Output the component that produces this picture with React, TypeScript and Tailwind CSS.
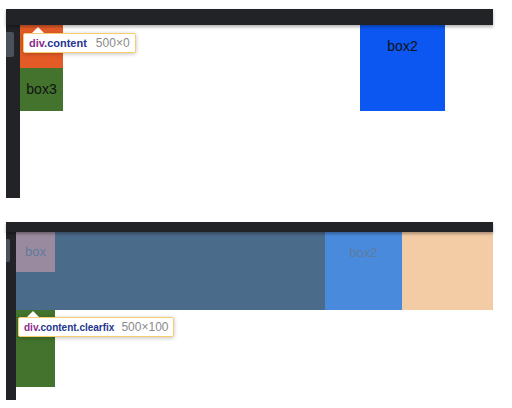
import React from "react";

const font = { fontFamily: '"Liberation Sans", Arial, sans-serif' };

function Tip({
  cls,
  size,
  className,
  labelSize,
  gap,
}: {
  cls: string;
  size: string;
  className: string;
  labelSize: string;
  gap: string;
}) {
  return (
    <div className={"absolute " + className}>
      <div className="absolute left-[9px] top-[-6px] w-0 h-0 border-l-[6px] border-r-[6px] border-b-[6px] border-l-transparent border-r-transparent border-b-white" />
      <div className="h-[20px] flex items-center px-[5px] bg-white border border-[#f7cd6e] rounded-[2px] shadow-[0_1px_4px_rgba(0,0,0,0.25)] whitespace-nowrap">
        <span className={"font-bold " + labelSize}>
          <span className="text-[#8b2a8a]">div</span>
          <span className="text-[#23358f]">{cls}</span>
        </span>
        <span className={"text-[12px] text-[#8a8a8a] " + gap}>{size}</span>
      </div>
    </div>
  );
}

export default function App() {
  return (
    <div className="relative w-[512px] h-[408px] bg-white pt-[9px] overflow-hidden" style={font}>
      {/* Panel 1 */}
      <div className="ml-[6px] w-[487px]">
        <div className="h-[16px] bg-[#222327] shadow-[0_2px_3px_rgba(0,0,0,0.3)] relative z-10" />
        <div className="flex">
          <div className="w-[14px] h-[173px] bg-[#222327] pt-[7px]">
            <div className="w-[8px] h-[25px] bg-[#4b515a] rounded-r-[2px]" />
          </div>
          <div className="flex flex-col w-[43px]">
            <div className="h-[43px] bg-[#e55b27]" />
            <div className="h-[43px] bg-[#43732d] flex items-center justify-center text-[14px] text-[#111]">box3</div>
          </div>
          <div className="w-[297px]" />
          <div className="w-[85px] h-[86px] bg-[#0c57f1] flex justify-center pt-[14px] text-[14px] text-[#111] leading-none">
            box2
          </div>
        </div>
      </div>

      {/* Panel 2 */}
      <div className="ml-[6px] w-[487px] mt-[24px]">
        <div className="h-[10px] bg-[#222327] shadow-[0_2px_3px_rgba(0,0,0,0.3)] relative z-10" />
        <div className="flex">
          <div className="w-[10px] h-[168px] bg-[#222327] pt-[7px]">
            <div className="w-[4px] h-[23px] bg-[#4b515a] rounded-r-[2px]" />
          </div>
          <div className="flex flex-col">
            <div className="flex h-[78px]">
              <div className="w-[309px] bg-[#4b6b8a]">
                <div className="w-[39px] h-[40px] bg-[#9a8a9f] flex items-center justify-center text-[13px] text-[#5d7c9c]">box</div>
              </div>
              <div className="w-[77px] bg-[#4a8add] flex justify-center pt-[14px] text-[13px] text-[#5d7c9c] leading-none">box2</div>
              <div className="w-[91px] bg-[#f3cba5]" />
            </div>
            <div className="w-[39px] h-[77px] bg-[#43732d]" />
          </div>
        </div>
      </div>

      <Tip cls=".content" size="500×0" className="left-[23px] top-[33px]" labelSize="text-[11px]" gap="ml-[9px]" />
      <Tip cls=".content.clearfix" size="500×100" className="left-[18px] top-[317px]" labelSize="text-[10px]" gap="ml-[7px]" />
    </div>
  );
}
